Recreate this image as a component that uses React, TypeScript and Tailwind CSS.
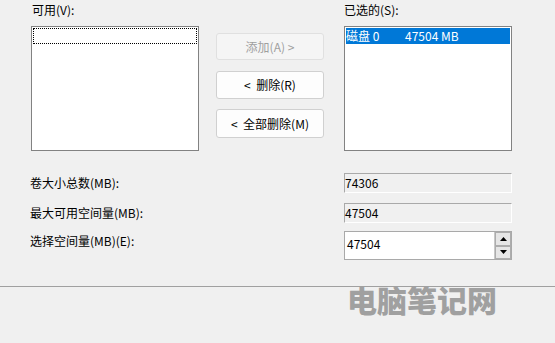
import React from "react";

const font = { fontFamily: '"Noto Sans CJK SC", "Noto Sans", sans-serif' };

export default function App() {
  return (
    <div
      className="w-[555px] h-[343px] bg-[#f0f0f0] flex flex-col text-[12px] text-black overflow-hidden"
      style={font}
    >
      {/* Top: lists and buttons */}
      <div className="flex pl-[31px] pt-[2px]">
        <div className="flex flex-col w-[168px]">
          <div className="h-[24px] leading-[16px] pl-[1px]">可用(V):</div>
          <div className="h-[125px] border border-[#828282] bg-white p-[1px]">
            <div className="h-[16px] border border-dotted border-black" />
          </div>
        </div>
        <div className="flex flex-col w-[108px] ml-[17px] pt-[31px]">
          <button className="h-[27px] rounded-[3px] border border-[#e0e0e0] bg-[#f5f5f5] text-[#9f9f9f] leading-[16px]">
            添加(A) &gt;
          </button>
          <button className="h-[28px] mt-[11px] rounded-[3px] border border-[#d0d0d0] bg-[#fdfdfd] leading-[16px]">
            &lt;&nbsp; 删除(R)
          </button>
          <button className="h-[29px] mt-[10px] rounded-[3px] border border-[#d0d0d0] bg-[#fdfdfd] leading-[16px]">
            &lt;&nbsp; 全部删除(M)
          </button>
        </div>
        <div className="flex flex-col w-[168px] ml-[20px]">
          <div className="h-[24px] leading-[16px]">已选的(S):</div>
          <div className="h-[125px] border border-[#828282] bg-white p-[1px]">
            <div className="h-[16px] bg-[#0078d7] text-white leading-[16px] flex">
              <span className="w-[59px]">磁盘 0</span>
              <span>47504 MB</span>
            </div>
          </div>
        </div>
      </div>

      {/* Fields */}
      <div className="flex flex-col pl-[30px] mt-[22px]">
        <div className="flex items-center h-[20px]">
          <div className="w-[314px] leading-[16px]">卷大小总数(MB):</div>
          <div className="w-[168px] h-[20px] border border-[#a9a9a9] border-b-white border-r-white bg-[#f0f0f0] leading-[18px]">
            74306
          </div>
        </div>
        <div className="flex items-center h-[20px] mt-[10px]">
          <div className="w-[314px] leading-[16px]">最大可用空间量(MB):</div>
          <div className="w-[168px] h-[20px] border border-[#a9a9a9] border-b-white border-r-white bg-[#f0f0f0] leading-[18px]">
            47504
          </div>
        </div>
        <div className="flex items-start h-[29px] mt-[8px]">
          <div className="w-[314px] leading-[16px] pt-[2px]">选择空间量(MB)(E):</div>
          <div className="w-[168px] h-[29px] border border-[#a9a9a9] bg-white flex items-stretch">
            <div className="flex-1 pl-[2px] pt-[4px] leading-[16px]">47504</div>
            <div className="w-[17px] flex flex-col border-l border-[#c8c8c8] bg-[#f0f0f0]">
              <div className="flex-1 flex items-center justify-center border border-[#adadad] bg-[#e6e6e6]">
                <svg width="7" height="4" viewBox="0 0 7 4">
                  <polygon points="0,4 7,4 3.5,0" fill="#000" />
                </svg>
              </div>
              <div className="flex-1 flex items-center justify-center border border-[#adadad] bg-[#e6e6e6]">
                <svg width="7" height="4" viewBox="0 0 7 4">
                  <polygon points="0,0 7,0 3.5,4" fill="#000" />
                </svg>
              </div>
            </div>
          </div>
        </div>
      </div>

      {/* Separator */}
      <div className="mt-[26px] h-[1px] bg-[#a0a0a0]" />

      {/* Watermark */}
      <div className="pl-[347px] mt-[-3px] text-[30px] leading-[30px] font-black text-[#a0a0a0]">
        电脑笔记网
      </div>
    </div>
  );
}
